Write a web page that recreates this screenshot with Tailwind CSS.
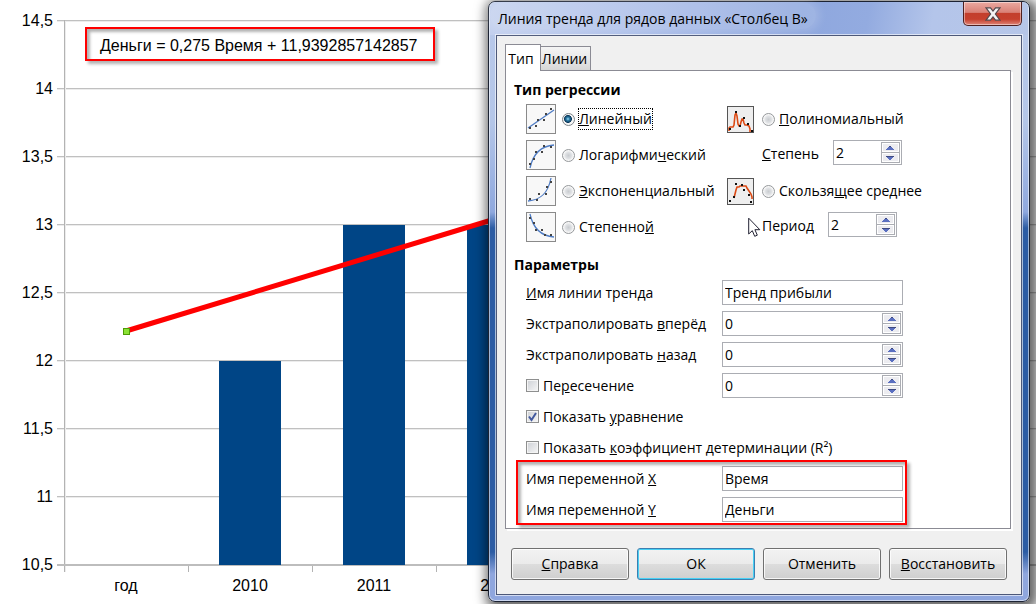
<!DOCTYPE html>
<html lang="ru">
<head>
<meta charset="utf-8">
<title>Линия тренда</title>
<script src="https://cdn.jsdelivr.net/npm/@tailwindcss/browser@4"></script>
</head>
<body class="relative min-h-screen overflow-hidden bg-white font-['Open_Sans','Noto_Sans',sans-serif] text-[14px] leading-5 text-black">

<!-- Shared symbols -->
<svg class="hidden" aria-hidden="true">
  <symbol id="up" viewBox="0 0 8 4"><path d="M3 0h2v1h1v1h1v1h1v1H0V3h1V2h1V1h1z" fill="#5a6fc0"/><path d="M3 0h2v1H3z" fill="#3f4a80"/></symbol>
  <symbol id="down" viewBox="0 0 8 4"><path d="M0 0h8v1H7v1H6v1H5v1H3V3H2V2H1V1H0z" fill="#5a6fc0"/><path d="M0 0h8v1H0z" fill="#3f4a80"/></symbol>
</svg>

<!-- Chart -->
<main class="min-h-screen">
  <svg class="block h-[604px] w-full font-['Liberation_Sans',Arial,sans-serif] text-[16px]" role="img" aria-label="Диаграмма">
    <g stroke="#c0c0c0" stroke-width="1">
      <path d="M57 20.5H1036M57 88.5H1036M57 156.5H1036M57 224.5H1036M57 292.5H1036M57 360.5H1036M57 428.5H1036M57 496.5H1036"/>
      <path stroke="#ececec" d="M57 21.5H1036M57 89.5H1036M57 157.5H1036M57 225.5H1036M57 293.5H1036M57 361.5H1036M57 429.5H1036M57 497.5H1036M65.500 21V572"/>
    </g>
    <g stroke="#b3b3b3"><path d="M64.500 20V572M188.500 565V572M312.500 565V572M436.500 565V572"/><path stroke-width="2" stroke="#bdbdbd" d="M57 565H1036"/></g>
    <g fill="#004586"><path d="M219 361h62v204h-62zM343 225h62v340h-62zM467 225h62v340h-62z"/></g>
    <path d="M126 331L495 219" stroke="#ff0000" stroke-width="5" fill="none"/>
    <rect x="123.500" y="328.500" width="6" height="6" fill="#8ae234" stroke="#4e9a06"/>
    <g text-anchor="end">
      <text x="53" y="26">14,5</text><text x="53" y="94">14</text><text x="53" y="162">13,5</text>
      <text x="53" y="230">13</text><text x="53" y="298">12,5</text><text x="53" y="366">12</text>
      <text x="53" y="434">11,5</text><text x="53" y="502">11</text><text x="53" y="570">10,5</text>
    </g>
    <g text-anchor="middle">
      <text x="126" y="591">год</text><text x="250" y="591">2010</text><text x="374" y="591">2011</text><text x="498" y="591">2012</text>
    </g>
  </svg>
</main>
<p class="absolute left-[85px] top-[27px] border-2 border-[#f00] pt-1 pr-[15px] pl-[13px] font-['Liberation_Sans',Arial,sans-serif] text-[16px] leading-[26px] whitespace-nowrap shadow-[3px_3px_3px_rgba(0,0,0,0.3),inset_3px_3px_3px_rgba(0,0,0,0.3)]">Деньги = 0,275 Время + 11,9392857142857</p>

<!-- Trend line dialog -->
<section role="dialog" aria-labelledby="dlg" class="absolute left-[488px] right-[6px] top-px rounded-[7px] border border-[#1c2333] bg-[linear-gradient(180deg,#b9c9ea_0,#b4c6e8_120px,#8fa8de_210px,#2c5ca4_226px,#2c5ca4_550px,#8fa6de_572px)] px-[7px] pb-[6px] shadow-[3px_3px_12px_5px_rgba(0,0,0,0.6),inset_0_0_0_1px_rgba(255,255,255,0.55)]">
  <header class="-mx-[6px] flex h-[33px] items-start justify-between rounded-t-[6px] bg-[linear-gradient(100deg,#c3d0ee_0,#a9bce8_30%,#8ea7de_58%,#93abe0_70%,#b4c5ea_82%,#b6c6e8)]">
    <h1 id="dlg" class="rounded-full bg-white/15 px-2 pt-[7px] text-[14px] shadow-[0_0_8px_4px_rgba(255,255,255,0.15)]">Линия тренда для рядов данных «Столбец B»</h1>
    <button aria-label="Закрыть" class="mr-[6px] grid h-6 w-[59px] place-items-center rounded-b-[5px] border border-t-0 border-[#4f2020] bg-[linear-gradient(180deg,#eba9a0_0,#d98177_45%,#c33e2c_50%,#c6402e_75%,#de8578)] shadow-[inset_0_0_0_1px_rgba(255,255,255,0.45)]">
      <svg width="16" height="14" viewBox="0 0 16 14"><path d="M1 .8h4.500L8 4l2.500-3.200H15L10.400 7 15 13.200h-4.500L8 10l-2.500 3.200H1L5.600 7z" fill="#f4f4f4" stroke="#54484c" stroke-width="1.200"/></svg>
    </button>
  </header>

  <div class="border border-[#4d5878] bg-[#f0f0f0] px-2 pt-2 pb-[14px] shadow-[0_0_0_1px_rgba(255,255,255,0.6)]">
    <div role="tablist" class="relative -mb-px flex items-end">
      <button role="tab" aria-selected="true" class="h-[27px] w-9 border border-b-0 border-[#8b8b94] bg-white pr-1 pt-px">Тип</button>
      <button role="tab" class="h-[25px] w-[51px] -ml-px border border-[#8b8b94] bg-[linear-gradient(180deg,#f4f4f4,#e8e8e8_50%,#d6d6d6)] pr-[2px] pt-px">Линии</button>
    </div>
    <div class="mr-[2px] border border-[#8b8b94] bg-white pt-[5px] pr-[10px] pb-[3px] pl-2 shadow-[2px_2px_0_#fff]">
      <h2 class="text-[14px] leading-7 font-bold">Тип регрессии</h2>
      <div class="grid grid-cols-[201px_1fr] gap-y-[6px] pl-3 whitespace-nowrap">
        <div class="flex h-[30px] items-center">
          <svg class="mr-[6px]" width="30" height="30" viewBox="0 0 30 30"><rect x=".5" y=".5" width="29" height="29" fill="#f8f8f8" stroke="#8a8a8a"/><path d="M2 24L28 6" stroke="#4f7cc4" stroke-width="1.300" fill="none"/><path d="M3 23h2v2H3zM9 21h2v2H9zM11 15h2v2h-2zM17 15h2v2h-2zM19 9h2v2h-2zM24 4h2v2h-2z" fill="#444"/></svg>
          <label class="flex items-center gap-1"><input type="radio" name="reg" checked class="size-[13px] appearance-none rounded-full border border-[#7d8388] bg-[radial-gradient(circle_at_45%_45%,#9fdcf5_0,#2b7aa5_20%,#0e3a5c_42%,#f4f4f4_50%,#fff)]"><span class="outline-1 outline-dotted outline-black"><u>Л</u>инейный</span></label>
        </div>
        <div class="flex h-[30px] items-center">
          <svg class="mr-2" width="27" height="27" viewBox="0 0 27 27"><rect x=".5" y=".5" width="26" height="26" fill="#eee" stroke="#555"/><path d="M2 25V22l1-1h3l1-2 1-10 1-2 1 3 1 8 1 2h1l1-4 1-3h1l1 4 1 2 2 0 2 1 1 3v3" fill="none" stroke="#dc4a14" stroke-width="1.600"/><path d="M2 22h2v2H2zM8 5h2v2H8zM12 19h2v2h-2zM16 11h2v2h-2zM20 17h2v2h-2zM24 24h2v2h-2z" fill="#111"/></svg>
          <label class="flex items-center gap-1"><input type="radio" name="reg" class="size-[13px] appearance-none rounded-full border border-[#95989b] bg-[radial-gradient(circle,#c9ccd0_0,#dfe1e4_40%,#f8f8f8_65%)]"><span><u>П</u>олиномиальный</span></label>
        </div>
        <div class="flex h-[30px] items-center">
          <svg class="mr-[6px]" width="30" height="30" viewBox="0 0 30 30"><rect x=".5" y=".5" width="29" height="29" fill="#f8f8f8" stroke="#8a8a8a"/><path d="M4 28C7 14 14 6 28 5" stroke="#4f7cc4" stroke-width="1.300" fill="none"/><path d="M3 23h2v2H3zM7 18h2v2H7zM9 11h2v2H9zM15 11h2v2h-2zM17 5h2v2h-2zM24 6h2v2h-2z" fill="#444"/></svg>
          <label class="flex items-center gap-1"><input type="radio" name="reg" class="size-[13px] appearance-none rounded-full border border-[#95989b] bg-[radial-gradient(circle,#c9ccd0_0,#dfe1e4_40%,#f8f8f8_65%)]"><span>Логарифми<u>ч</u>еский</span></label>
        </div>
        <div class="flex h-[30px] items-start gap-[14px] pl-[35px]">
          <label for="deg" class="leading-7"><u>С</u>тепень</label>
          <div class="flex h-[25px] w-[69px] border border-[#abadb3] bg-white p-px"><input id="deg" value="2" class="w-full min-w-0 flex-1 pl-[1px] outline-none"><span class="flex w-[19px] shrink-0 flex-col border border-[#abadb3]"><button aria-label="Больше" class="grid flex-1 place-items-center bg-[#ececf0] shadow-[inset_0_0_0_1px_#fff]"><svg width="8" height="4"><use href="#up"/></svg></button><button aria-label="Меньше" class="grid flex-1 place-items-center border-t border-[#abadb3] bg-[#ececf0] shadow-[inset_0_0_0_1px_#fff]"><svg width="8" height="4"><use href="#down"/></svg></button></span></div>
        </div>
        <div class="flex h-[30px] items-center">
          <svg class="mr-[6px]" width="30" height="30" viewBox="0 0 30 30"><rect x=".5" y=".5" width="29" height="29" fill="#f8f8f8" stroke="#8a8a8a"/><path d="M2 25C14 24 22 18 25 2" stroke="#4f7cc4" stroke-width="1.300" fill="none"/><path d="M3 22h2v2H3zM10 23h2v2h-2zM12 17h2v2h-2zM19 17h2v2h-2zM20 10h2v2h-2zM24 5h2v2h-2z" fill="#444"/></svg>
          <label class="flex items-center gap-1"><input type="radio" name="reg" class="size-[13px] appearance-none rounded-full border border-[#95989b] bg-[radial-gradient(circle,#c9ccd0_0,#dfe1e4_40%,#f8f8f8_65%)]"><span><u>Э</u>кспоненциальный</span></label>
        </div>
        <div class="flex h-[30px] items-center">
          <svg class="mr-2" width="27" height="27" viewBox="0 0 27 27"><rect x=".5" y=".5" width="26" height="26" fill="#eee" stroke="#555"/><path d="M7 20l2-8 1-3h2l1-1h6l1 2 2 3 2 3 1 3v2" fill="none" stroke="#dc4a14" stroke-width="1.600"/><path d="M2 22h2v2H2zM6 18h2v2H6zM8 5h2v2H8zM14 6h2v2h-2zM16 11h2v2h-2zM21 16h2v2h-2zM23 23h2v2h-2z" fill="#111"/></svg>
          <label class="flex items-center gap-1"><input type="radio" name="reg" class="size-[13px] appearance-none rounded-full border border-[#95989b] bg-[radial-gradient(circle,#c9ccd0_0,#dfe1e4_40%,#f8f8f8_65%)]"><span>Скользя<u>щ</u>ее среднее</span></label>
        </div>
        <div class="flex h-[30px] items-center">
          <svg class="mr-[6px]" width="30" height="30" viewBox="0 0 30 30"><rect x=".5" y=".5" width="29" height="29" fill="#f8f8f8" stroke="#8a8a8a"/><path d="M4 2C7 16 15 24 28 25" stroke="#4f7cc4" stroke-width="1.300" fill="none"/><path d="M3 5h2v2H3zM7 10h2v2H7zM9 17h2v2H9zM15 17h2v2h-2zM18 22h2v2h-2zM24 22h2v2h-2z" fill="#444"/></svg>
          <label class="flex items-center gap-1"><input type="radio" name="reg" class="size-[13px] appearance-none rounded-full border border-[#95989b] bg-[radial-gradient(circle,#c9ccd0_0,#dfe1e4_40%,#f8f8f8_65%)]"><span>Степенно<u>й</u></span></label>
        </div>
        <div class="flex h-[30px] items-start gap-[14px] pl-[35px]">
          <label for="per" class="leading-7">Перио<u>д</u></label>
          <div class="flex h-[25px] w-[69px] border border-[#abadb3] bg-white p-px"><input id="per" value="2" class="w-full min-w-0 flex-1 pl-[1px] outline-none"><span class="flex w-[19px] shrink-0 flex-col border border-[#abadb3]"><button aria-label="Больше" class="grid flex-1 place-items-center bg-[#ececf0] shadow-[inset_0_0_0_1px_#fff]"><svg width="8" height="4"><use href="#up"/></svg></button><button aria-label="Меньше" class="grid flex-1 place-items-center border-t border-[#abadb3] bg-[#ececf0] shadow-[inset_0_0_0_1px_#fff]"><svg width="8" height="4"><use href="#down"/></svg></button></span></div>
        </div>
      </div>

      <h2 class="mt-[11px] text-[14px] leading-6 font-bold">Параметры</h2>
      <div class="pl-3 whitespace-nowrap">
        <div class="grid h-[31px] grid-cols-[196px_181px] items-center">
          <label for="nm"><u>И</u>мя линии тренда</label>
          <input id="nm" value="Тренд прибыли" class="h-[25px] border border-[#abadb3] bg-white px-[2px] outline-none">
        </div>
        <div class="grid h-[31px] grid-cols-[196px_181px] items-center">
          <label for="fw">Экстраполировать <u>в</u>перёд</label>
          <div class="flex h-[25px] border border-[#abadb3] bg-white p-px"><input id="fw" value="0" class="w-full min-w-0 flex-1 pl-[1px] outline-none"><span class="flex w-[19px] shrink-0 flex-col border border-[#abadb3]"><button aria-label="Больше" class="grid flex-1 place-items-center bg-[#ececf0] shadow-[inset_0_0_0_1px_#fff]"><svg width="8" height="4"><use href="#up"/></svg></button><button aria-label="Меньше" class="grid flex-1 place-items-center border-t border-[#abadb3] bg-[#ececf0] shadow-[inset_0_0_0_1px_#fff]"><svg width="8" height="4"><use href="#down"/></svg></button></span></div>
        </div>
        <div class="grid h-[31px] grid-cols-[196px_181px] items-center">
          <label for="bw">Экстраполировать <u>н</u>азад</label>
          <div class="flex h-[25px] border border-[#abadb3] bg-white p-px"><input id="bw" value="0" class="w-full min-w-0 flex-1 pl-[1px] outline-none"><span class="flex w-[19px] shrink-0 flex-col border border-[#abadb3]"><button aria-label="Больше" class="grid flex-1 place-items-center bg-[#ececf0] shadow-[inset_0_0_0_1px_#fff]"><svg width="8" height="4"><use href="#up"/></svg></button><button aria-label="Меньше" class="grid flex-1 place-items-center border-t border-[#abadb3] bg-[#ececf0] shadow-[inset_0_0_0_1px_#fff]"><svg width="8" height="4"><use href="#down"/></svg></button></span></div>
        </div>
        <div class="grid h-[31px] grid-cols-[196px_181px] items-center">
          <label class="flex items-center gap-1"><input type="checkbox" class="size-[13px] appearance-none border border-[#8e8f8f] bg-[linear-gradient(135deg,#cdd0d5,#f6f6f6)] shadow-[inset_0_0_0_1px_#f4f4f4]"><span>Пе<u>р</u>есечение</span></label>
          <div class="flex h-[25px] border border-[#abadb3] bg-white p-px"><input aria-label="Пересечение" value="0" class="w-full min-w-0 flex-1 pl-[1px] outline-none"><span class="flex w-[19px] shrink-0 flex-col border border-[#abadb3]"><button aria-label="Больше" class="grid flex-1 place-items-center bg-[#ececf0] shadow-[inset_0_0_0_1px_#fff]"><svg width="8" height="4"><use href="#up"/></svg></button><button aria-label="Меньше" class="grid flex-1 place-items-center border-t border-[#abadb3] bg-[#ececf0] shadow-[inset_0_0_0_1px_#fff]"><svg width="8" height="4"><use href="#down"/></svg></button></span></div>
        </div>
        <label class="flex h-[31px] items-center gap-1"><span class="relative flex"><input type="checkbox" checked class="peer size-[13px] appearance-none border border-[#8e8f8f] bg-[linear-gradient(135deg,#cdd0d5,#f6f6f6)] shadow-[inset_0_0_0_1px_#f4f4f4]"><svg class="pointer-events-none invisible absolute inset-0 peer-checked:visible" width="13" height="13" viewBox="0 0 13 13"><path d="M3 6.500L5.500 10 10 3" fill="none" stroke="#42599e" stroke-width="2"/></svg></span><span>Показать <u>у</u>равнение</span></label>
        <label class="flex h-[31px] items-center gap-1"><input type="checkbox" class="size-[13px] appearance-none border border-[#8e8f8f] bg-[linear-gradient(135deg,#cdd0d5,#f6f6f6)] shadow-[inset_0_0_0_1px_#f4f4f4]"><span>Показать <u>к</u>оэффициент детерминации (R²)</span></label>
        <div class="relative w-[377px]">
          <div class="grid h-[31px] grid-cols-[196px_181px] items-center">
            <label for="vx">Имя переменной <u>X</u></label>
            <input id="vx" value="Время" class="h-[25px] border border-[#abadb3] bg-white px-[2px] outline-none">
          </div>
          <div class="grid h-[31px] grid-cols-[196px_181px] items-center">
            <label for="vy">Имя переменной <u>Y</u></label>
            <input id="vy" value="Деньги" class="h-[25px] border border-[#abadb3] bg-white px-[2px] outline-none">
          </div>
          <div class="pointer-events-none absolute -top-[3px] -right-1 bottom-0 -left-[10px] border-2 border-[#f00] shadow-[3px_3px_3px_rgba(0,0,0,0.3),inset_3px_3px_3px_rgba(0,0,0,0.3)]"></div>
        </div>
      </div>
    </div>

    <footer class="mt-[19px] mr-[6px] ml-[6px] grid grid-cols-4 gap-2">
      <button class="h-8 rounded-[3px] border border-[#707070] bg-[linear-gradient(180deg,#f2f2f2_0,#ebebeb_49%,#dddddd_50%,#cfcfcf)] shadow-[inset_0_0_0_1px_rgba(255,255,255,0.8)]"><u>С</u>правка</button>
      <button class="h-8 rounded-[3px] border border-[#3c7fb1] bg-[linear-gradient(180deg,#f2f2f2_0,#ebebeb_49%,#dddddd_50%,#cfcfcf)] shadow-[inset_0_0_0_1px_#48d0f4]">ОК</button>
      <button class="h-8 rounded-[3px] border border-[#707070] bg-[linear-gradient(180deg,#f2f2f2_0,#ebebeb_49%,#dddddd_50%,#cfcfcf)] shadow-[inset_0_0_0_1px_rgba(255,255,255,0.8)]">Отменить</button>
      <button class="h-8 rounded-[3px] border border-[#707070] bg-[linear-gradient(180deg,#f2f2f2_0,#ebebeb_49%,#dddddd_50%,#cfcfcf)] shadow-[inset_0_0_0_1px_rgba(255,255,255,0.8)]"><u>В</u>осстановить</button>
    </footer>
  </div>
</section>

<!-- Mouse pointer -->
<svg class="pointer-events-none absolute top-[217px] left-[748px]" width="13" height="21" viewBox="0 0 13 21"><path d="M.7 1.200V17l3.600-3.300 2.400 5.600 2.600-1.100-2.400-5.500h4.900z" fill="#fff" stroke="#223" stroke-width="1"/></svg>
</body>
</html>
